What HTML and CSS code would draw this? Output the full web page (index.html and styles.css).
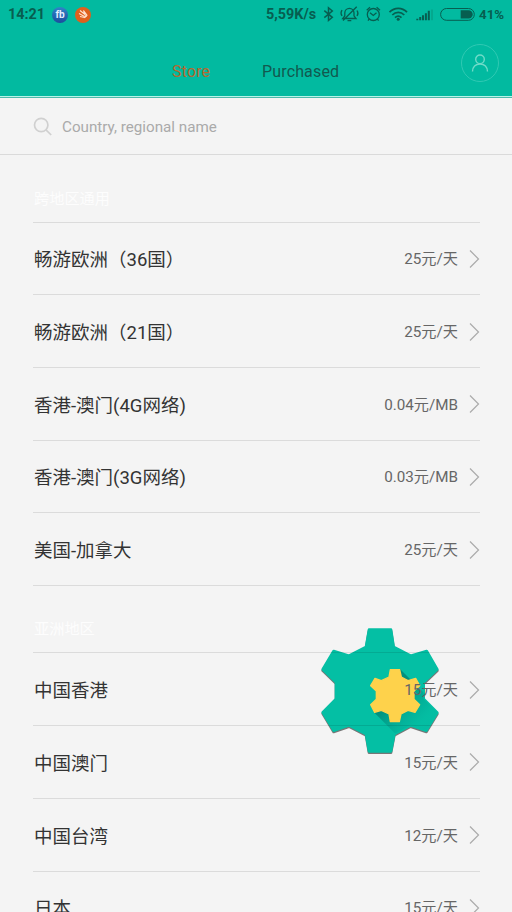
FILE: index.html
```
<!DOCTYPE html>
<html lang="zh-CN">
<head>
<meta charset="utf-8">
<title>Store</title>
<link rel="stylesheet" href="styles.css">
</head>
<body>
<svg class="defs" width="0" height="0">
  <symbol id="chevron" viewBox="0 0 11 20"><path d="M1 1.5 9.5 10 1 18.5" fill="none" stroke="#ababab" stroke-width="1.2"/></symbol>
</svg>
<div class="screen">
  <header class="header">
    <div class="status">
      <span class="time">14:21</span>
      <span class="badge fb">fb</span>
      <span class="badge swift"><svg width="15" height="15" viewBox="0 0 15 15"><path d="M4 3.500 9 7.500 7.500 3.500 11 8.200 8.500 11M3 6.500 8 9.300h3M4 9.500l4.500 1" fill="none" stroke="#ffe3d0" stroke-width="1.1"/></svg></span>
      <span class="speed">5,59K/s</span>
      <svg class="sicons" width="156" height="20" viewBox="0 0 156 20" fill="none" stroke="#075e50" stroke-width="1.3">
        <path d="M1.300 5.700 9.300 12.300 5.500 15.500V2.800L9.300 6 1.300 12.600" stroke-width="1.500"/>
        <path d="M19.700 13.500h13.300l-2-2.600V8a4.600 4.600 0 0 0-9.200 0v2.900zM24.500 15.700h3.800M33.700 1.800 20 15.500M19 5c-1.300 2-1.300 4 0 6M34 5.500c1.200 1.800 1.200 3.800 0 5.500"/>
        <circle cx="50.300" cy="9.500" r="6"/><path d="M47 7.700 50.300 10.500 53.500 7.700M43.700 5.200 47 2.200M57 5.200 53.600 2.200M46.300 13.800 45 15.600M54.300 13.800 55.600 15.600"/>
        <path d="M66.500 7.200c5-5.200 12.500-5.200 17.500 0M69.300 10c3.500-3.500 8.500-3.500 12 0M72 12.600c2-1.900 4.500-1.900 6.500 0" stroke-width="1.700"/><circle cx="75.200" cy="14.300" r="1.500" fill="#075e50" stroke="none"/>
        <path d="M94.300 15.300v-1.500M97.200 15.300v-3.300M100 15.300v-5M102.900 15.300v-7M105.800 15.300v-9.500" stroke-width="2"/><path d="M109 15.300V4.500" stroke-width="1.600" stroke="#05a48a"/>
        <rect x="117.600" y="3.500" width="33.700" height="11.800" rx="5.900" stroke-width="1"/>
        <path d="M137.700 5.200h7.800a4.200 4.200 0 0 1 0 8.400h-7.800z" fill="#075e50" stroke="none"/>
      </svg>
      <span class="percent">41%</span>
    </div>
    <nav class="tabs">
      <span class="tab active">Store</span>
      <span class="tab">Purchased</span>
      <span class="avatar"><svg width="18" height="18" viewBox="0 0 18 18" fill="none" stroke="#70dbc8" stroke-width="1.400"><circle cx="9" cy="5.300" r="4.300"/><path d="M1.500 17.500c0-4.500 3-7.500 7.500-7.500s7.500 3 7.500 7.500"/></svg></span>
    </nav>
  </header>
  <div class="search">
    <svg width="20" height="20" viewBox="0 0 20 20" fill="none" stroke="#d0d0d0" stroke-width="1.700"><circle cx="8.200" cy="8" r="6.700"/><path d="m13 12.800 5.200 5.200"/></svg>
    <span>Country, regional name</span>
  </div>
  <main class="list">
    <svg class="gear" width="202" height="150" viewBox="0 0 606 450" stroke-linejoin="round">
      <defs>
        <path id="cog" d="M177 44H243L251 96 302 122 350 108 382 163 341 202V252L382 293 349 347 302 331 253 357 243 409H177L168 357 117 331 71 347 38 292 78 252V202L38 163 71 108 117 122 168 96Z"/>
        <clipPath id="body"><use href="#cog"/></clipPath>
        <linearGradient id="shade" gradientUnits="userSpaceOnUse" x1="255" y1="241" x2="335" y2="321"><stop offset="0" stop-color="#006f63" stop-opacity=".6"/><stop offset="1" stop-color="#009a87" stop-opacity=".05"/></linearGradient>
      </defs>
      <use href="#cog" class="cog-shadow"/>
      <use href="#cog" fill="#04bfa4" stroke="#04bfa4" stroke-width="8"/>
      <path clip-path="url(#body)" d="M270 162 470 362 394 494 194 294z" fill="url(#shade)"/>
      <path d="M241 164H269L274 186 294 197 317 190 329 212 312 228V253L329 269 315 292 294 286 273 297 268 320H241L237 297 214 286 194 292 182 269 199 253V228L182 212 195 190 214 197 237 186Z" fill="#fed24b" stroke="#fed24b" stroke-width="4"/>
    </svg>
    <h2 class="group">跨地区通用</h2>
    <div class="row"><span class="name">畅游欧洲（36国）</span><span class="price">25元/天</span><svg class="chev"><use href="#chevron"/></svg></div>
    <div class="row"><span class="name">畅游欧洲（21国）</span><span class="price">25元/天</span><svg class="chev"><use href="#chevron"/></svg></div>
    <div class="row"><span class="name">香港-澳门(4G网络)</span><span class="price">0.04元/MB</span><svg class="chev"><use href="#chevron"/></svg></div>
    <div class="row"><span class="name">香港-澳门(3G网络)</span><span class="price">0.03元/MB</span><svg class="chev"><use href="#chevron"/></svg></div>
    <div class="row"><span class="name">美国-加拿大</span><span class="price">25元/天</span><svg class="chev"><use href="#chevron"/></svg></div>
    <h2 class="group">亚洲地区</h2>
    <div class="row"><span class="name">中国香港</span><span class="price">15元/天</span><svg class="chev"><use href="#chevron"/></svg></div>
    <div class="row"><span class="name">中国澳门</span><span class="price">15元/天</span><svg class="chev"><use href="#chevron"/></svg></div>
    <div class="row"><span class="name">中国台湾</span><span class="price">12元/天</span><svg class="chev"><use href="#chevron"/></svg></div>
    <div class="row"><span class="name">日本</span><span class="price">15元/天</span><svg class="chev"><use href="#chevron"/></svg></div>
  </main>
</div>
</body>
</html>
```
FILE: styles.css
```
* { box-sizing: border-box; }
body { margin: 0; background: #f4f4f4; font-family: Roboto, "Noto Sans CJK SC", sans-serif; }
.defs { position: absolute; }
.screen { width: 512px; height: 912px; overflow: hidden; background: #f4f4f4; }

.header { height: 98px; background: #02baa0; border-bottom: 1px solid #4db9aa; box-shadow: inset 0 -1px #b9f3e8; }
.status { display: flex; align-items: center; height: 29px; padding-left: 8px; color: #075e50; font-size: 14.400px; font-weight: 700; white-space: nowrap; }
.time { width: 44px; }
.badge { width: 16px; height: 16px; border-radius: 50%; display: flex; align-items: center; justify-content: center; }
.fb { background: linear-gradient(#2f86c8, #1b4c9e); color: #e4efff; font-size: 10px; line-height: 16px; }
.swift { margin-left: 7px; background: #df601d; }
.speed { width: 57px; margin-left: 175px; }
.percent { font-size: 13.300px; }
.tabs { display: flex; align-items: center; position: relative; height: 69px; padding: 16px 13px 0 172px; font-size: 16px; letter-spacing: 0.150px; color: #12594f; }
.tab { line-height: 20px; }
.tab.active { width: 90px; color: #b5692f; }
.avatar { width: 38px; height: 38px; margin: -17px 0 0 auto; border: 1px solid #30c9b3; border-radius: 50%; display: flex; align-items: center; justify-content: center; }

.search { display: flex; align-items: center; gap: 9px; height: 57px; padding: 1px 0 0 33px; border-bottom: 1px solid #dadada; color: #aaa; font-size: 15.200px; }
.list { position: relative; padding: 0 32px 0 33px; }
.gear { position: absolute; left: 310px; top: 460px; }
.cog-shadow { fill: #777; stroke: #777; stroke-width: 8px; filter: blur(2px); transform: translate(0, 4px); }
.group { position: relative; margin: 0; height: 67.500px; padding: 31.500px 0 0 1px; border-bottom: 1px solid rgba(0, 0, 0, .1); color: #fdfdfd; font-size: 15.200px; font-weight: 400; line-height: 24px; }
.row { position: relative; display: flex; align-items: center; height: 72.700px; padding-left: 1px; border-bottom: 1px solid rgba(0, 0, 0, .1); color: #333; }
.name { flex: 1; font-size: 18.500px; }
.price { margin: -2px 11px 0 0; color: #666; font-size: 15.200px; }
.chev { width: 11px; height: 20px; margin-top: 1px; }
```
